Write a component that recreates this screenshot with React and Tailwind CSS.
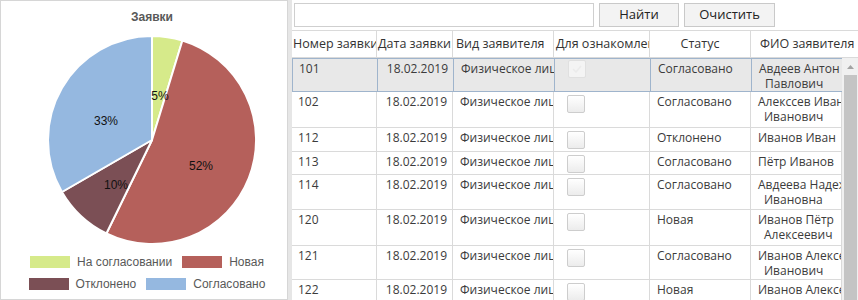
import React from "react"

const rows = [
  { num: "101", status: "Согласовано", fio: ["Авдеев Антон", "Павлович"], h: "h-[34px]", selected: true },
  { num: "102", status: "Согласовано", fio: ["Алекссев Иван", "Иванович"], h: "h-[36px]" },
  { num: "112", status: "Отклонено", fio: ["Иванов Иван"], h: "h-[24px]" },
  { num: "113", status: "Согласовано", fio: ["Пётр Иванов"], h: "h-[23px]" },
  { num: "114", status: "Согласовано", fio: ["Авдеева Надежда", "Ивановна"], h: "h-[35px]" },
  { num: "120", status: "Новая", fio: ["Иванов Пётр", "Алексеевич"], h: "h-[36px]" },
  { num: "121", status: "Согласовано", fio: ["Иванов Алексей", "Иванович"], h: "h-[34px]" },
  { num: "122", status: "Новая", fio: ["Иванов Алексей", "Иванович"], h: "h-[35px]" },
]

const legend = [
  [
    { color: "bg-[#d6ea8a]", label: "На согласовании" },
    { color: "bg-[#b5605b]", label: "Новая" },
  ],
  [
    { color: "bg-[#7b4f55]", label: "Отклонено" },
    { color: "bg-[#95b8e0]", label: "Согласовано" },
  ],
]

function PieChart() {
  return (
    <svg width="286" height="222" viewBox="0 0 286 222" className="block">
      <g stroke="#ffffff" strokeWidth="2" strokeLinejoin="round">
        <path d="M151 110 L151 6 A104 104 0 0 1 181.41 10.55 Z" fill="#d6ea8a" />
        <path d="M151 110 L181.41 10.55 A104 104 0 1 1 105.41 203.47 Z" fill="#b5605b" />
        <path d="M151 110 L105.41 203.47 A104 104 0 0 1 60.93 162 Z" fill="#7b4f55" />
        <path d="M151 110 L60.93 162 A104 104 0 0 1 151 6 Z" fill="#95b8e0" />
      </g>
      <g fontFamily="'Liberation Sans', Arial, sans-serif" fontSize="12" fill="#111111" textAnchor="middle" dominantBaseline="central">
        <text x="159" y="66">5%</text>
        <text x="105" y="91">33%</text>
        <text x="200" y="136">52%</text>
        <text x="115" y="155">10%</text>
      </g>
    </svg>
  )
}

function Checkbox({ faded }) {
  if (faded) {
    return (
      <div className="w-[18px] h-[18px] rounded-[2px] border border-[#e0e0e0] bg-[#f4f4f4] flex items-center justify-center">
        <svg width="10" height="8" viewBox="0 0 10 8">
          <polyline points="1,4 4,7 9,1" fill="none" stroke="#ebebeb" strokeWidth="1.5" />
        </svg>
      </div>
    )
  }
  return (
    <div className="w-[18px] h-[18px] rounded-[2px] border border-[#cdcdcd] bg-gradient-to-b from-white to-[#ececec]" />
  )
}

export default function App() {
  return (
    <div className="flex w-[858px] h-[300px] overflow-hidden bg-white text-[#3b3b3b]" style={{ fontFamily: "'Open Sans', 'Noto Sans', sans-serif" }}>
      {/* Chart panel */}
      <div className="w-[288px] h-[300px] shrink-0 border border-[#d6d6d6] bg-white flex flex-col" style={{ fontFamily: "'Liberation Sans', Arial, sans-serif" }}>
        <div className="h-[29px] pl-[16px] pt-[9px] text-center text-[12px] leading-[14px] font-bold text-[#595959]">Заявки</div>
        <PieChart />
        <div className="pl-[6px] mt-[4px] flex flex-col gap-[10px] text-[12px] leading-[12px] text-[#595959]">
          {legend.map((row, i) => (
            <div key={i} className="flex justify-center gap-[10px]">
              {row.map((item) => (
                <div key={item.label} className="flex items-center gap-[7px]">
                  <div className={`w-[40px] h-[12px] ${item.color}`} />
                  <span>{item.label}</span>
                </div>
              ))}
            </div>
          ))}
        </div>
      </div>

      {/* Splitter */}
      <div className="w-[4px] h-[300px] shrink-0 bg-[#e6e6e6]" />

      {/* Grid panel */}
      <div className="w-[566px] flex flex-col">
        <div className="h-[30px] flex items-start pt-[3px] pl-[2px] gap-[5px]">
          <input className="w-[300px] h-[24px] border border-[#cfcfcf] bg-white outline-none" />
          <button className="w-[80px] h-[24px] border border-[#c9c9c9] bg-[#f3f3f3] text-[13px] text-[#222]">Найти</button>
          <button className="w-[91px] h-[24px] border border-[#c9c9c9] bg-[#f3f3f3] text-[13px] text-[#222]">Очистить</button>
        </div>

        {/* Header */}
        <div className="grid grid-cols-[85px_76px_101px_96px_101px_107px] h-[28px] border-t border-b border-[#dadada] text-[12.5px] leading-[16px] text-[#333]">
          <div className="border-r border-[#dadada] overflow-hidden whitespace-nowrap pl-[1px] pt-[5px]">Номер заявки</div>
          <div className="border-r border-[#dadada] overflow-hidden whitespace-nowrap pl-[1px] pt-[5px]">Дата заявки</div>
          <div className="border-r border-[#dadada] overflow-hidden whitespace-nowrap pl-[3px] pt-[5px]">Вид заявителя</div>
          <div className="border-r border-[#dadada] overflow-hidden whitespace-nowrap pl-[2px] pt-[5px]">Для ознакомления</div>
          <div className="border-r border-[#dadada] overflow-hidden whitespace-nowrap text-center pt-[5px]">Статус</div>
          <div className="overflow-hidden whitespace-nowrap pl-[9px] pt-[5px]">ФИО заявителя</div>
        </div>

        <div className="flex flex-1 min-h-0">
          <div className="w-[550px] flex flex-col text-[12px] leading-[15px]">
            {rows.map((r) => {
              const line = r.selected ? "border-[#9fb4cc]" : "border-[#dadada]"
              return (
                <div
                  key={r.num}
                  className={`grid grid-cols-[85px_76px_101px_96px_101px_91px] shrink-0 ${r.h} border-b ${line} ${
                    r.selected ? "bg-[#e8e8e8] border-t border-l" : ""
                  }`}
                >
                  <div className={`border-r ${line} pl-[6px] pt-[2px] overflow-hidden whitespace-nowrap`}>{r.num}</div>
                  <div className={`border-r ${line} pr-[5px] pt-[2px] text-right overflow-hidden whitespace-nowrap`}>18.02.2019</div>
                  <div className={`border-r ${line} pl-[7px] pt-[2px] overflow-hidden whitespace-nowrap`}>Физическое лицо</div>
                  <div className={`border-r ${line} pl-[13px] ${r.selected ? "pt-[1px]" : "pt-[3px]"}`}>
                    <Checkbox faded={r.selected} />
                  </div>
                  <div className={`border-r ${line} pl-[7px] pt-[2px] overflow-hidden whitespace-nowrap`}>{r.status}</div>
                  <div className={`border-r ${line} pt-[2px] overflow-hidden whitespace-nowrap`}>
                    <div className="pl-[7px] overflow-hidden">{r.fio[0]}</div>
                    {r.fio[1] && <div className="pl-[13px] overflow-hidden">{r.fio[1]}</div>}
                  </div>
                </div>
              )
            })}
          </div>

          {/* Scrollbar */}
          <div className="w-[16px] bg-[#f0f0f0] flex flex-col items-center">
            <div className="h-[17px] w-full flex items-center justify-center">
              <svg width="7" height="4" viewBox="0 0 7 4">
                <polygon points="0,4 3.5,0 7,4" fill="#a3a3a3" />
              </svg>
            </div>
            <div className="w-[13px] flex-1 bg-[#c4c4c4]" />
          </div>
        </div>
      </div>
    </div>
  )
}
